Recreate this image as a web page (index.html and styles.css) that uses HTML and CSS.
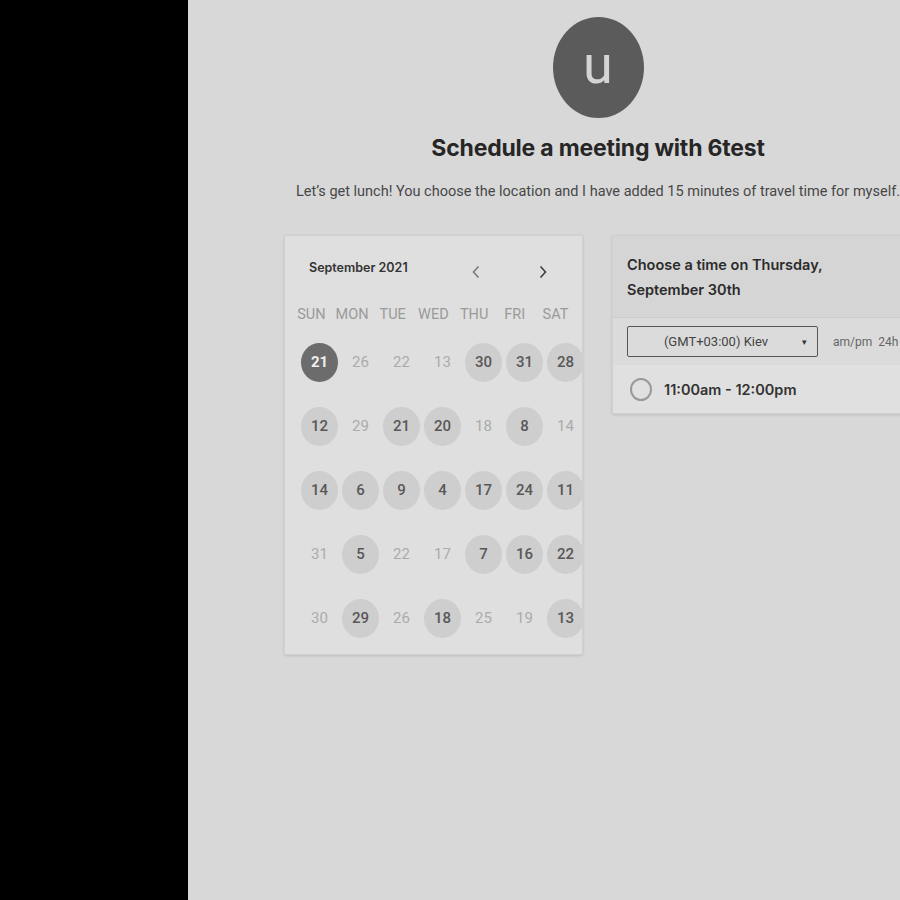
FILE: index.html
```html
<!DOCTYPE html>
<html>
<head>
<meta charset="utf-8">
<link rel="stylesheet" href="styles.css">
</head>
<body>
<div class="app">
  <aside class="sidebar"></aside>
  <main class="main">
    <div class="avatar">u</div>
    <h1 class="title">Schedule a meeting with 6test</h1>
    <p class="subtitle">Let’s get lunch! You choose the location and I have added 15 minutes of travel time for myself.</p>
    <div class="panels">
      <section class="calendar">
        <div class="cal-head">
          <span class="month">September 2021</span>
          <svg class="nav prev" width="10" height="14" viewBox="0 0 10 14"><path d="M7.5 1.5 L2.5 7 L7.5 12.5" fill="none" stroke="currentColor" stroke-width="1.6"/></svg>
          <svg class="nav next" width="10" height="14" viewBox="0 0 10 14"><path d="M2.5 1.5 L7.5 7 L2.5 12.5" fill="none" stroke="currentColor" stroke-width="1.6"/></svg>
        </div>
        <div class="weekdays">
          <span>SUN</span><span>MON</span><span>TUE</span><span>WED</span><span>THU</span><span>FRI</span><span>SAT</span>
        </div>
        <div class="days">
          <span class="day sel">21</span><span class="day">26</span><span class="day">22</span><span class="day">13</span><span class="day av">30</span><span class="day av">31</span><span class="day av">28</span>
          <span class="day av">12</span><span class="day">29</span><span class="day av">21</span><span class="day av">20</span><span class="day">18</span><span class="day av">8</span><span class="day">14</span>
          <span class="day av">14</span><span class="day av">6</span><span class="day av">9</span><span class="day av">4</span><span class="day av">17</span><span class="day av">24</span><span class="day av">11</span>
          <span class="day">31</span><span class="day av">5</span><span class="day">22</span><span class="day">17</span><span class="day av">7</span><span class="day av">16</span><span class="day av">22</span>
          <span class="day">30</span><span class="day av">29</span><span class="day">26</span><span class="day av">18</span><span class="day">25</span><span class="day">19</span><span class="day av">13</span>
        </div>
      </section>
      <section class="times">
        <div class="times-head">Choose a time on Thursday,<br>September 30th</div>
        <div class="tz-row">
          <div class="tz-select"><span class="tz-text">(GMT+03:00) Kiev</span><span class="caret">&#9662;</span></div>
          <span class="fmt">am/pm</span><span class="fmt">24h</span>
        </div>
        <div class="slot">
          <span class="radio"></span>
          <span class="slot-text">11:00am - 12:00pm</span>
        </div>
      </section>
    </div>
  </main>
</div>
</body>
</html>
```
FILE: styles.css
```css
html, body {
  margin: 0;
  padding: 0;
}
body {
  background: #d8d8d8;
  overflow: hidden;
  width: 900px;
  height: 900px;
  font-family: Roboto, "Liberation Sans", sans-serif;
}
.app {
  display: flex;
  height: 900px;
}
.sidebar {
  flex: 0 0 188px;
  background: #000;
}
.main {
  flex: 0 0 820px;
  display: flex;
  flex-direction: column;
  align-items: center;
  padding-top: 17px;
  box-sizing: border-box;
}
.avatar {
  width: 91px;
  height: 101px;
  border-radius: 50%;
  background: #5b5b5b;
  color: #d4d4d4;
  font-family: Roboto, sans-serif;
  font-size: 54px;
  line-height: 96px;
  text-align: center;
}
.title {
  margin: 15px 0 0;
  font-family: Inter, sans-serif;
  font-weight: 700;
  font-size: 23px;
  line-height: 30px;
  color: #262626;
  letter-spacing: -0.2px;
}
.subtitle {
  margin: 19px 0 0;
  font-size: 14.5px;
  line-height: 20px;
  color: #474747;
  white-space: nowrap;
}
.panels {
  margin-top: 33px;
  display: flex;
  gap: 29px;
  align-items: flex-start;
}
.calendar {
  width: 299px;
  height: 420px;
  box-sizing: border-box;
  background: #dfdfdf;
  border: 1px solid #d0d0d0;
  border-radius: 2px;
  box-shadow: 0 1px 3px rgba(0,0,0,0.12);
  overflow: hidden;
}
.cal-head {
  height: 63px;
  display: flex;
  align-items: center;
  padding-left: 24px;
}
.month {
  font-family: Inter, sans-serif;
  font-weight: 600;
  font-size: 12.5px;
  color: #333;
  width: 162px;
}
.nav {
  display: block;
  margin-top: 8px;
}
.prev { color: #7a7a7a; }
.next { color: #3e3e3e; margin-left: 57px; }
.weekdays {
  display: grid;
  grid-template-columns: repeat(7, 40.7px);
  margin-left: 6px;
  margin-top: 2px;
  height: 28px;
  line-height: 28px;
  font-size: 14.5px;
  color: #9a9a9a;
  text-align: center;
}
.days {
  display: grid;
  grid-template-columns: repeat(7, 41px);
  grid-auto-rows: 64px;
  margin-left: 14px;
  margin-top: 1px;
}
.day {
  width: 37px;
  height: 39px;
  border-radius: 50%;
  justify-self: center;
  align-self: center;
  display: flex;
  align-items: center;
  justify-content: center;
  font-size: 15px;
  color: #ababab;
}
.day.av {
  background: #cecece;
  color: #585858;
  font-weight: 500;
}
.day.sel {
  background: #6c6c6c;
  color: #efefef;
  font-weight: 700;
}
.times {
  width: 300px;
  box-sizing: border-box;
  background: #dcdcdc;
  border: 1px solid #d0d0d0;
  border-radius: 2px;
  box-shadow: 0 1px 3px rgba(0,0,0,0.12);
}
.times-head {
  height: 82px;
  box-sizing: border-box;
  display: flex;
  align-items: center;
  padding: 0 14px;
  background: #d5d5d5;
  border-bottom: 1px solid #cbcbcb;
  font-family: Inter, sans-serif;
  font-weight: 600;
  font-size: 14.5px;
  line-height: 25px;
  color: #2b2b2b;
}
.tz-row {
  height: 47px;
  display: flex;
  align-items: center;
  padding-left: 14px;
  background: #dbdbdb;
}
.tz-select {
  width: 191px;
  height: 31px;
  box-sizing: border-box;
  border: 1px solid #555;
  border-radius: 2px;
  display: flex;
  align-items: center;
  font-size: 13px;
  color: #444;
  margin-right: 15px;
}
.tz-text {
  flex: 1;
  text-align: center;
  padding-left: 2px;
}
.caret {
  font-size: 9px;
  color: #333;
  margin-right: 10px;
}
.fmt {
  font-size: 12px;
  color: #666;
  margin-right: 6px;
}
.slot {
  height: 48px;
  display: flex;
  align-items: center;
  padding-left: 17px;
  background: #e0e0e0;
}
.radio {
  width: 22px;
  height: 23px;
  box-sizing: border-box;
  border: 2px solid #999;
  border-radius: 50%;
  margin-right: 12px;
}
.slot-text {
  font-family: Inter, sans-serif;
  font-weight: 600;
  font-size: 14.5px;
  color: #333;
}
```
